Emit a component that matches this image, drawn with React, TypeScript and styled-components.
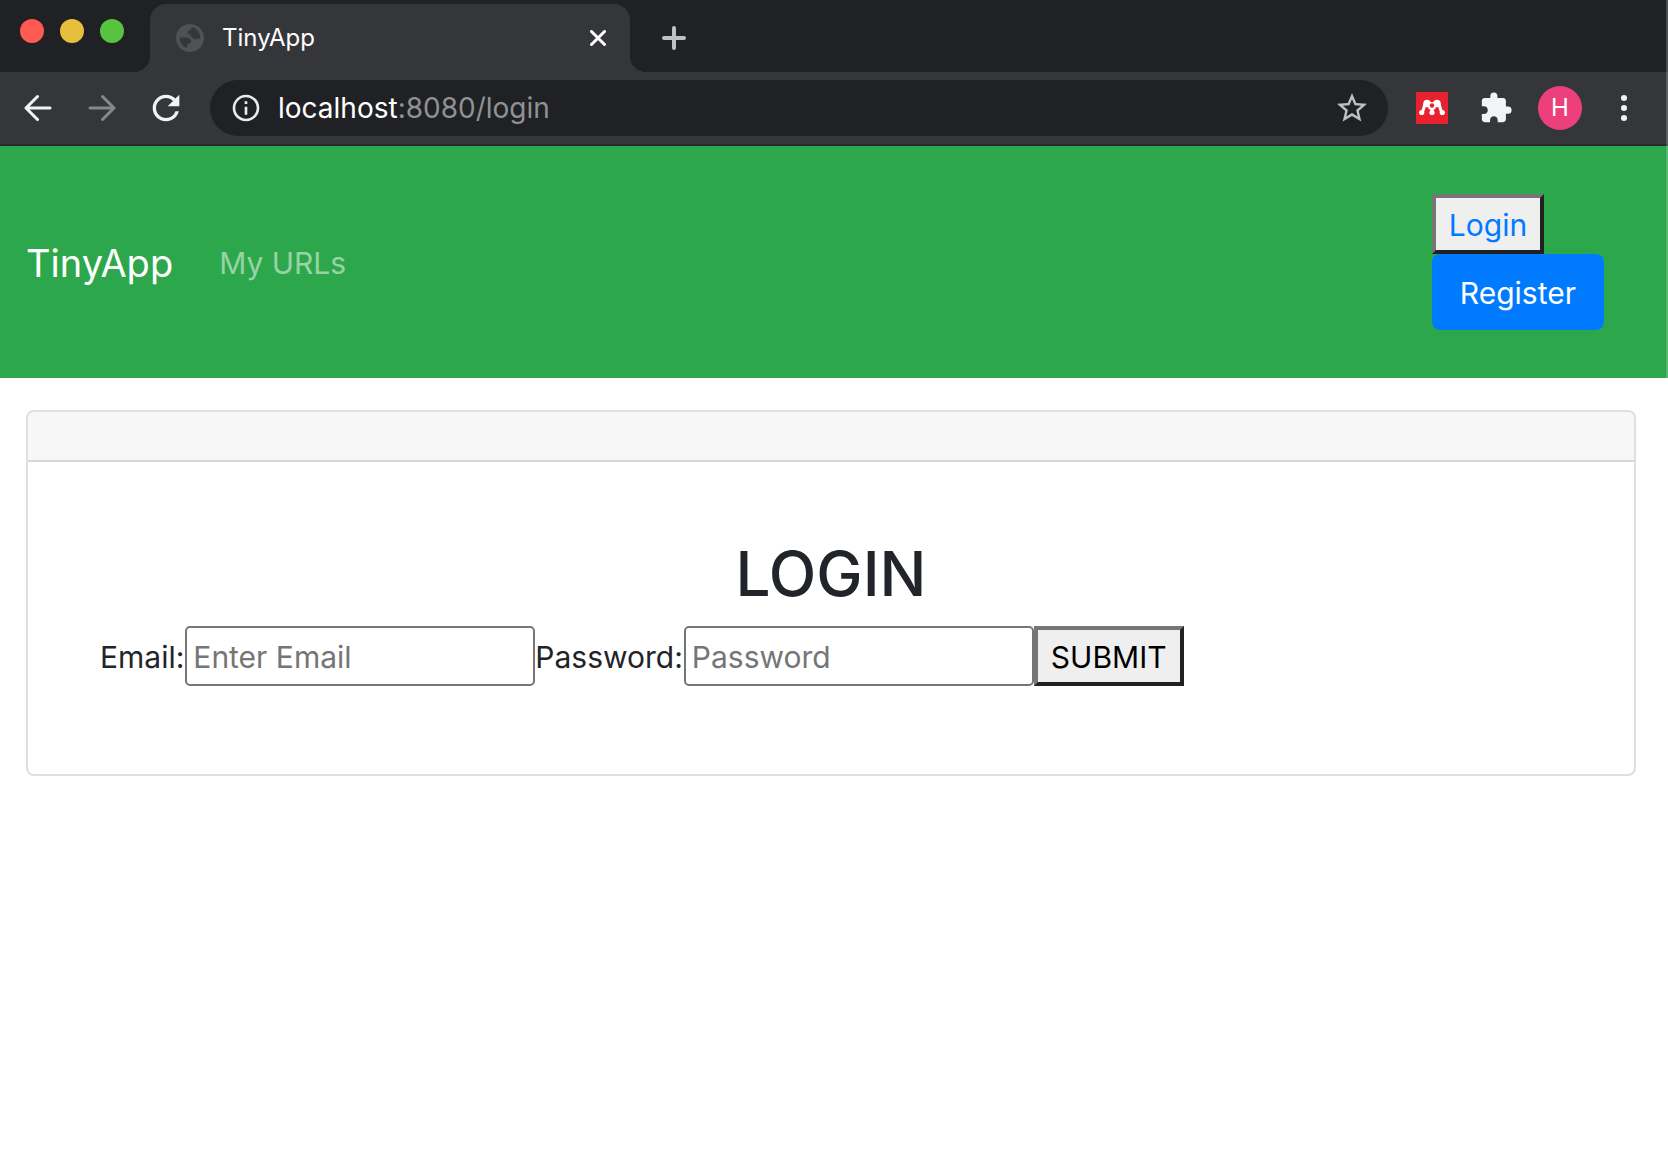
import React from "react";
import styled, { createGlobalStyle } from "styled-components";
import { MdRefresh, MdInfoOutline, MdStarBorder, MdExtension } from "react-icons/md";

const GlobalStyle = createGlobalStyle`
  *, *::before, *::after { box-sizing: border-box; }
  body {
    margin: 0;
    background: #fff;
    color: #212529;
    font-family: Inter, Roboto, "Liberation Sans", sans-serif;
    font-size: 30px;
    line-height: 48px;
  }
  button, input { font: inherit; margin: 0; }
  a { text-decoration: none; }
`;

const Window = styled.div`
  position: relative;
  min-height: 100vh;
  &::after {
    content: "";
    position: absolute;
    top: 0;
    right: 0;
    bottom: 0;
    width: 2px;
    background: rgba(255, 255, 255, 0.2);
    pointer-events: none;
  }
`;

const TabStrip = styled.header`
  display: flex;
  align-items: flex-start;
  height: 72px;
  padding: 4px 20px 0;
  background: #202124;
`;

const TrafficLights = styled.div`
  display: flex;
  gap: 16px;
  margin: 15px 26px 0 0;
`;

const Light = styled.button<{ $color: string }>`
  width: 24px;
  height: 24px;
  padding: 0;
  border: 0;
  border-radius: 50%;
  background: ${(p) => p.$color};
`;

const Tab = styled.div`
  position: relative;
  display: flex;
  align-items: center;
  width: 480px;
  height: 68px;
  padding: 0 16px 0 26px;
  border-radius: 16px 16px 0 0;
  background: #35363a;
  color: #fff;
  &::before,
  &::after {
    content: "";
    position: absolute;
    bottom: 0;
    width: 16px;
    height: 16px;
  }
  &::before {
    right: 100%;
    background: radial-gradient(circle at 0 0, transparent 16px, #35363a 16px);
  }
  &::after {
    left: 100%;
    background: radial-gradient(circle at 100% 0, transparent 16px, #35363a 16px);
  }
`;

const TabTitle = styled.span`
  flex: 1;
  margin-left: 18px;
  font-size: 24px;
  line-height: 32px;
`;

const TabButton = styled.button`
  display: grid;
  place-items: center;
  width: 32px;
  height: 68px;
  padding: 0;
  border: 0;
  background: none;
`;

const NewTabButton = styled(TabButton)`
  margin-left: 28px;
`;

const Toolbar = styled.div`
  display: flex;
  align-items: center;
  height: 74px;
  padding: 0 12px 0 6px;
  border-bottom: 2px solid #28292b;
  background: #35363a;
`;

const ToolButton = styled.button<{ $color?: string }>`
  display: grid;
  place-items: center;
  flex: none;
  width: 64px;
  height: 64px;
  padding: 0;
  border: 0;
  background: none;
  color: ${(p) => p.$color ?? "#f1f3f4"};
`;

const AddressBar = styled.div`
  display: flex;
  align-items: center;
  flex: 1;
  min-width: 0;
  height: 56px;
  margin: 0 12px;
  padding: 0 18px 0 20px;
  border-radius: 28px;
  background: #202124;
  color: #e8eaed;
`;

const Address = styled.div`
  flex: 1;
  margin-left: 16px;
  color: #909194;
  font-size: 28px;
  line-height: 32px;
  outline: none;
`;

const Host = styled.span`
  color: #fff;
`;

const StarButton = styled.button`
  display: grid;
  place-items: center;
  padding: 0;
  border: 0;
  background: none;
  color: #bdc1c6;
`;

const Avatar = styled.span`
  display: grid;
  place-items: center;
  width: 44px;
  height: 44px;
  border-radius: 50%;
  background: #ec407a;
  color: #fff;
  font-size: 24px;
  line-height: 32px;
`;

const Navbar = styled.nav`
  display: flex;
  align-items: center;
  padding: 48px 64px 48px 26px;
  background: #2da74b;
`;

const Brand = styled.a`
  margin-right: 46px;
  padding-top: 2px;
  color: #fff;
  font-size: 38px;
  line-height: 60px;
`;

const NavLink = styled.a`
  margin-right: auto;
  padding-top: 2px;
  color: rgba(255, 255, 255, 0.5);
`;

const Account = styled.div`
  display: flex;
  flex-direction: column;
  align-items: flex-start;
`;

const OutsetButton = styled.button<{ $color: string }>`
  height: 60px;
  padding: 2px 13px 0;
  border: 4px solid;
  border-color: #767676 #212121 #212121 #767676;
  background: #efefef;
  color: ${(p) => p.$color};
`;

const RegisterLink = styled.a`
  padding: 15px 28px 13px;
  border-radius: 8px;
  background: #007bff;
  color: #fff;
`;

const Card = styled.main`
  margin: 32px 32px 0 26px;
  border: 2px solid #dfdfdf;
  border-radius: 8px;
  overflow: hidden;
`;

const CardHeader = styled.div`
  height: 50px;
  border-bottom: 2px solid #d8d8d8;
  background: #f7f7f7;
`;

const CardBody = styled.div`
  padding: 74px 72px 88px;
`;

const Title = styled.h1`
  margin: 0 0 14px;
  font-size: 62px;
  font-weight: 500;
  line-height: 76px;
  text-align: center;
`;

const LoginForm = styled.form`
  display: flex;
  align-items: center;
`;

const Label = styled.label`
  padding: 2px 1px 0 0;
`;

const TextInput = styled.input`
  width: 350px;
  height: 60px;
  padding: 2px 6px 0;
  border: 2px solid #767676;
  border-radius: 5px;
  background: #fff;
  color: #212529;
  &::placeholder {
    color: #757575;
    opacity: 1;
  }
`;

const Globe = () => (
  <svg width="28" height="28" viewBox="0 0 28 28" aria-hidden="true">
    <circle cx="14" cy="14" r="14" fill="#505155" />
    <path
      fill="#35363a"
      d="M17 3.600 C14 3.600 15.500 6 13 6.500 C11 7 11 9.500 13 10 C15.500 10.300 14.500 12.500 16.500 14 C19 16 20.500 14 24.300 14.500 C24 8.500 21 5 17 3.600Z M3.600 13.500 L10 13.500 C13 13.500 15.500 15 15 18 C14.500 20 11.500 19 11 21.500 L11 24 C6.500 22.500 3.600 18.500 3.600 13.500Z"
    />
  </svg>
);

const Mendeley = () => (
  <svg width="32" height="32" viewBox="0 0 32 32" aria-hidden="true">
    <rect width="32" height="32" fill="#e8212f" />
    <g fill="none" stroke="#fff" strokeWidth="3">
      <path d="M5.500 20.500 C8.500 18 7.500 15 9 12 M16 15 V20.500 M26.500 20.500 C23.500 18 24.500 15 23 12" />
    </g>
    <g fill="#fff">
      <circle cx="11" cy="11.500" r="3.700" />
      <circle cx="21" cy="11.500" r="3.700" />
      <circle cx="16" cy="14" r="4" />
      <circle cx="5.700" cy="20.500" r="2.600" />
      <circle cx="16" cy="20.500" r="2.600" />
      <circle cx="26.300" cy="20.500" r="2.600" />
    </g>
    <circle cx="16" cy="13.500" r="2.200" fill="#e8212f" />
  </svg>
);

const Arrow = ({ forward = false }: { forward?: boolean }) => (
  <svg width="28" height="28" viewBox="0 0 28 28" fill="none" stroke="currentColor" strokeWidth="3" strokeLinecap="round" strokeLinejoin="round" aria-hidden="true">
    <path d={forward ? "M2 14H26M14.500 2.500L26 14L14.500 25.500" : "M26 14H2M13.500 2.500L2 14L13.500 25.500"} />
  </svg>
);

export default function App() {
  return (
    <>
      <GlobalStyle />
      <Window>
        <TabStrip>
          <TrafficLights>
            <Light $color="#ff5a52" aria-label="Close window" />
            <Light $color="#e6c03c" aria-label="Minimize window" />
            <Light $color="#57c43f" aria-label="Zoom window" />
          </TrafficLights>
          <Tab>
            <Globe />
            <TabTitle>TinyApp</TabTitle>
            <TabButton aria-label="Close tab">
              <svg width="16" height="16" viewBox="0 0 16 16" stroke="#fff" strokeWidth="3" strokeLinecap="round">
                <path d="M1.500 1.500L14.500 14.500M14.500 1.500L1.500 14.500" />
              </svg>
            </TabButton>
          </Tab>
          <NewTabButton aria-label="New tab">
            <svg width="24" height="24" viewBox="0 0 24 24" stroke="#bdc1c6" strokeWidth="4" strokeLinecap="round">
              <path d="M12 2V22M2 12H22" />
            </svg>
          </NewTabButton>
        </TabStrip>
        <Toolbar>
          <ToolButton aria-label="Back"><Arrow /></ToolButton>
          <ToolButton aria-label="Forward" $color="#86878a"><Arrow forward /></ToolButton>
          <ToolButton aria-label="Reload"><MdRefresh size={40} /></ToolButton>
          <AddressBar>
            <MdInfoOutline size={32} />
            <Address role="textbox" tabIndex={0} aria-label="Address">
              <Host>localhost</Host>:8080/login
            </Address>
            <StarButton aria-label="Bookmark this page"><MdStarBorder size={36} /></StarButton>
          </AddressBar>
          <ToolButton aria-label="Mendeley"><Mendeley /></ToolButton>
          <ToolButton aria-label="Extensions"><MdExtension size={34} /></ToolButton>
          <ToolButton aria-label="Profile"><Avatar>H</Avatar></ToolButton>
          <ToolButton aria-label="Menu">
            <svg width="8" height="28" viewBox="0 0 8 28" fill="currentColor">
              <circle cx="4" cy="4" r="3" />
              <circle cx="4" cy="14" r="3" />
              <circle cx="4" cy="24" r="3" />
            </svg>
          </ToolButton>
        </Toolbar>
        <Navbar>
          <Brand href="#">TinyApp</Brand>
          <NavLink href="#urls">My URLs</NavLink>
          <Account>
            <OutsetButton type="button" $color="#007bff">Login</OutsetButton>
            <RegisterLink href="#register">Register</RegisterLink>
          </Account>
        </Navbar>
        <Card>
          <CardHeader />
          <CardBody>
            <Title>LOGIN</Title>
            <LoginForm onSubmit={(e) => e.preventDefault()}>
              <Label htmlFor="email">Email:</Label>
              <TextInput id="email" type="email" placeholder="Enter Email" />
              <Label htmlFor="password">Password:</Label>
              <TextInput id="password" type="password" placeholder="Password" />
              <OutsetButton type="submit" $color="#000">SUBMIT</OutsetButton>
            </LoginForm>
          </CardBody>
        </Card>
      </Window>
    </>
  );
}
